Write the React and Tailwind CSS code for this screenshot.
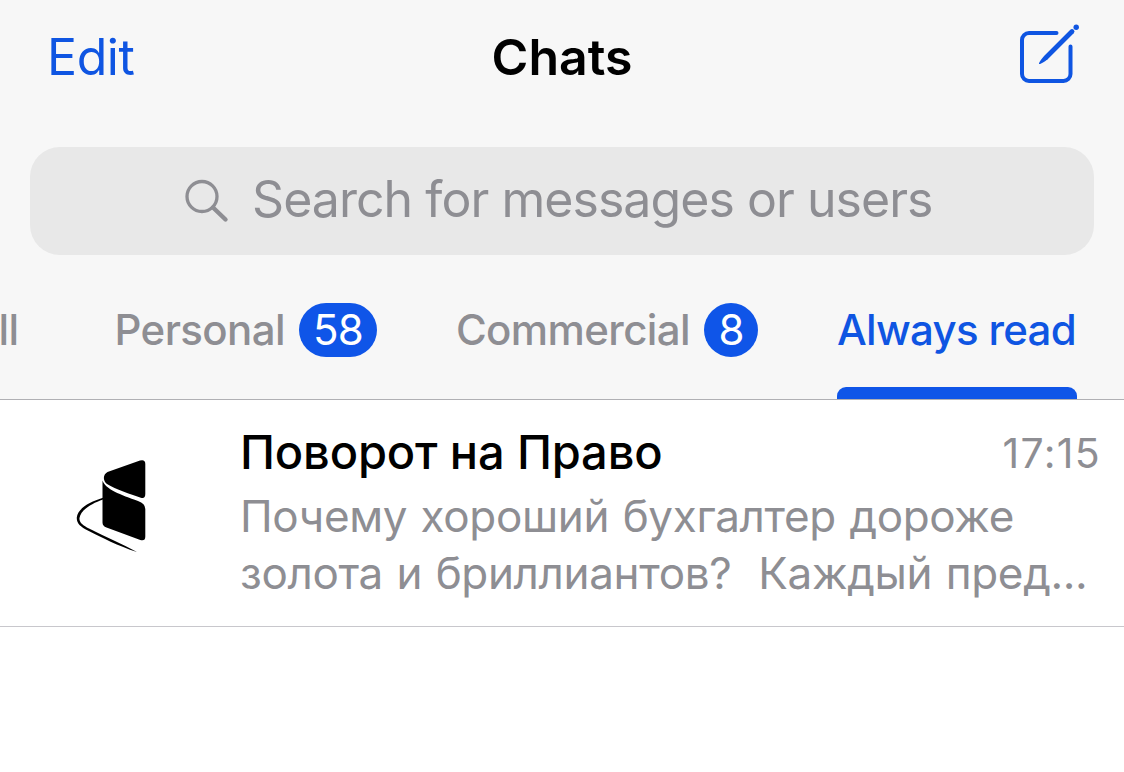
const tabs = [
  { id: 'all', label: 'All' },
  { id: 'personal', label: 'Personal', unread: 58 },
  { id: 'commercial', label: 'Commercial', unread: 8 },
  { id: 'always', label: 'Always read', active: true },
];

function ComposeIcon() {
  return (
    <svg className="h-[62px] w-[62px]" viewBox="0 0 62 62" fill="none" stroke="currentColor" strokeWidth="4" strokeLinecap="round">
      <path d="M38.500 9H11a7 7 0 0 0-7 7v34a7 7 0 0 0 7 7h34.500a7 7 0 0 0 7-7V22.500" />
      <path d="M54 7.500 28 33.500" strokeWidth="4.800" />
      <path d="M26.200 31.900c-2.200 2.200-4 4.500-5.100 7-.4.900.1 1.400 1 1 2.600-1.100 5.100-2.600 7.400-4.600Z" fill="currentColor" stroke="none" />
      <circle cx="58.200" cy="3.200" r="2.700" fill="currentColor" stroke="none" />
    </svg>
  );
}

function SearchIcon() {
  return (
    <svg className="h-11 w-11" viewBox="0 0 44 44" fill="none" stroke="currentColor" strokeLinecap="round">
      <circle cx="17" cy="17.500" r="15" strokeWidth="3.300" />
      <path d="M28 28.500 40.500 40.500" strokeWidth="4.400" />
    </svg>
  );
}

function ChannelLogo() {
  return (
    <svg className="h-[94px] w-[72px]" viewBox="0 0 72 94" fill="none">
      <path d="M31.500 12 64 .6Q69.300-.8 69.300 4v30q0 5-4.500 3.700C54 34 40 29.500 31 24c-4.500-3.500-4-9.500.5-12Z" fill="#000" />
      <path d="M26.500 20.500C29 29 45 35 62 41q7.300 2.500 7.300 8v27.500q0 5-5 3.500L30.500 67.500q-4-1.500-4-5Z" fill="#000" />
      <path d="M27 37.800C13 42 1.500 49 .8 57.500c-.4 6 4 9.500 11 13C26 77.500 42 86 61 92 46 84 29 76.500 13 68.500 7 65.500 3 62.500 3.500 58 4.500 50.500 15 43.500 27 39.400Z" fill="#000" />
    </svg>
  );
}

function Tab({ label, unread, active }) {
  return (
    <button type="button" className={`flex shrink-0 flex-col justify-between first:mr-[17px] ${active ? 'text-[#0f55e2]' : 'text-[#8e8e93]'}`}>
      <span className={`flex h-[54px] items-center gap-[14px] text-[42px] font-medium leading-[54px] ${active ? 'pr-px tracking-[-0.700px]' : 'tracking-[-0.6px]'}`}>
        {label}
        {unread && (
          <span className="flex h-[54px] min-w-[54px] items-center justify-center rounded-full bg-[#0f55e8] px-[14px] font-normal tracking-[-0.8px] text-white">
            {unread}
          </span>
        )}
      </span>
      {active && <span className="h-3 w-full rounded-t-[9px] bg-[#0f55e8]" />}
    </button>
  );
}

function ChatRow({ title, time, preview }) {
  return (
    <article className="flex h-[227px] border-b border-[#c8c7cc] pl-[76px]">
      <div className="w-[164px] shrink-0 pt-[60px]">
        <ChannelLogo />
      </div>
      <div className="min-w-0 flex-1 pt-5">
        <div className="flex h-[68px] items-start justify-between pr-[23px] pt-[4px]">
          <h2 className="text-[47px] font-medium leading-[56px] tracking-[-0.15px] text-black">{title}</h2>
          <time className="pt-px text-[41px] leading-[56px] tracking-[1.300px] text-[#8e8e93]">{time}</time>
        </div>
        <p className="whitespace-pre text-[44px] leading-[57px] tracking-[-0.35px] text-[#8e8e93] [word-spacing:1.500px]">{preview}</p>
      </div>
    </article>
  );
}

export default function App() {
  return (
    <main className="h-[772px] w-[1124px] overflow-hidden bg-white font-['Inter',sans-serif]">
      <header className="h-[400px] border-b border-[#b0b0b4] bg-[#f7f7f7]">
        <div className="grid h-[147px] grid-cols-3 items-start pl-[47px] pr-[44px] pt-[24px]">
          <button type="button" className="justify-self-start text-[50px] leading-[66px] tracking-[-0.4px] text-[#0f55e2]">Edit</button>
          <h1 className="mr-[3px] justify-self-center text-[50px] font-semibold leading-[66px] text-black">Chats</h1>
          <button type="button" className="justify-self-end text-[#0f55e2]">
            <ComposeIcon />
          </button>
        </div>
        <label className="mx-[30px] flex h-[108px] items-center gap-[23px] rounded-[30px] bg-[#e8e8e8] pl-[155px] text-[#8e8e93]">
          <SearchIcon />
          <span className="pb-1 text-[50px] leading-[66px] tracking-[-0.950px]">Search for messages or users</span>
        </label>
        <nav className="flex h-36 justify-end gap-[79px] overflow-hidden pr-[47px] pt-12">
          {tabs.map((tab) => (
            <Tab key={tab.id} {...tab} />
          ))}
        </nav>
      </header>
      <ChatRow
        title="Поворот на Право"
        time="17:15"
        preview={'Почему хороший бухгалтер дороже\nзолота и бриллиантов?  Каждый пред...'}
      />
    </main>
  );
}
